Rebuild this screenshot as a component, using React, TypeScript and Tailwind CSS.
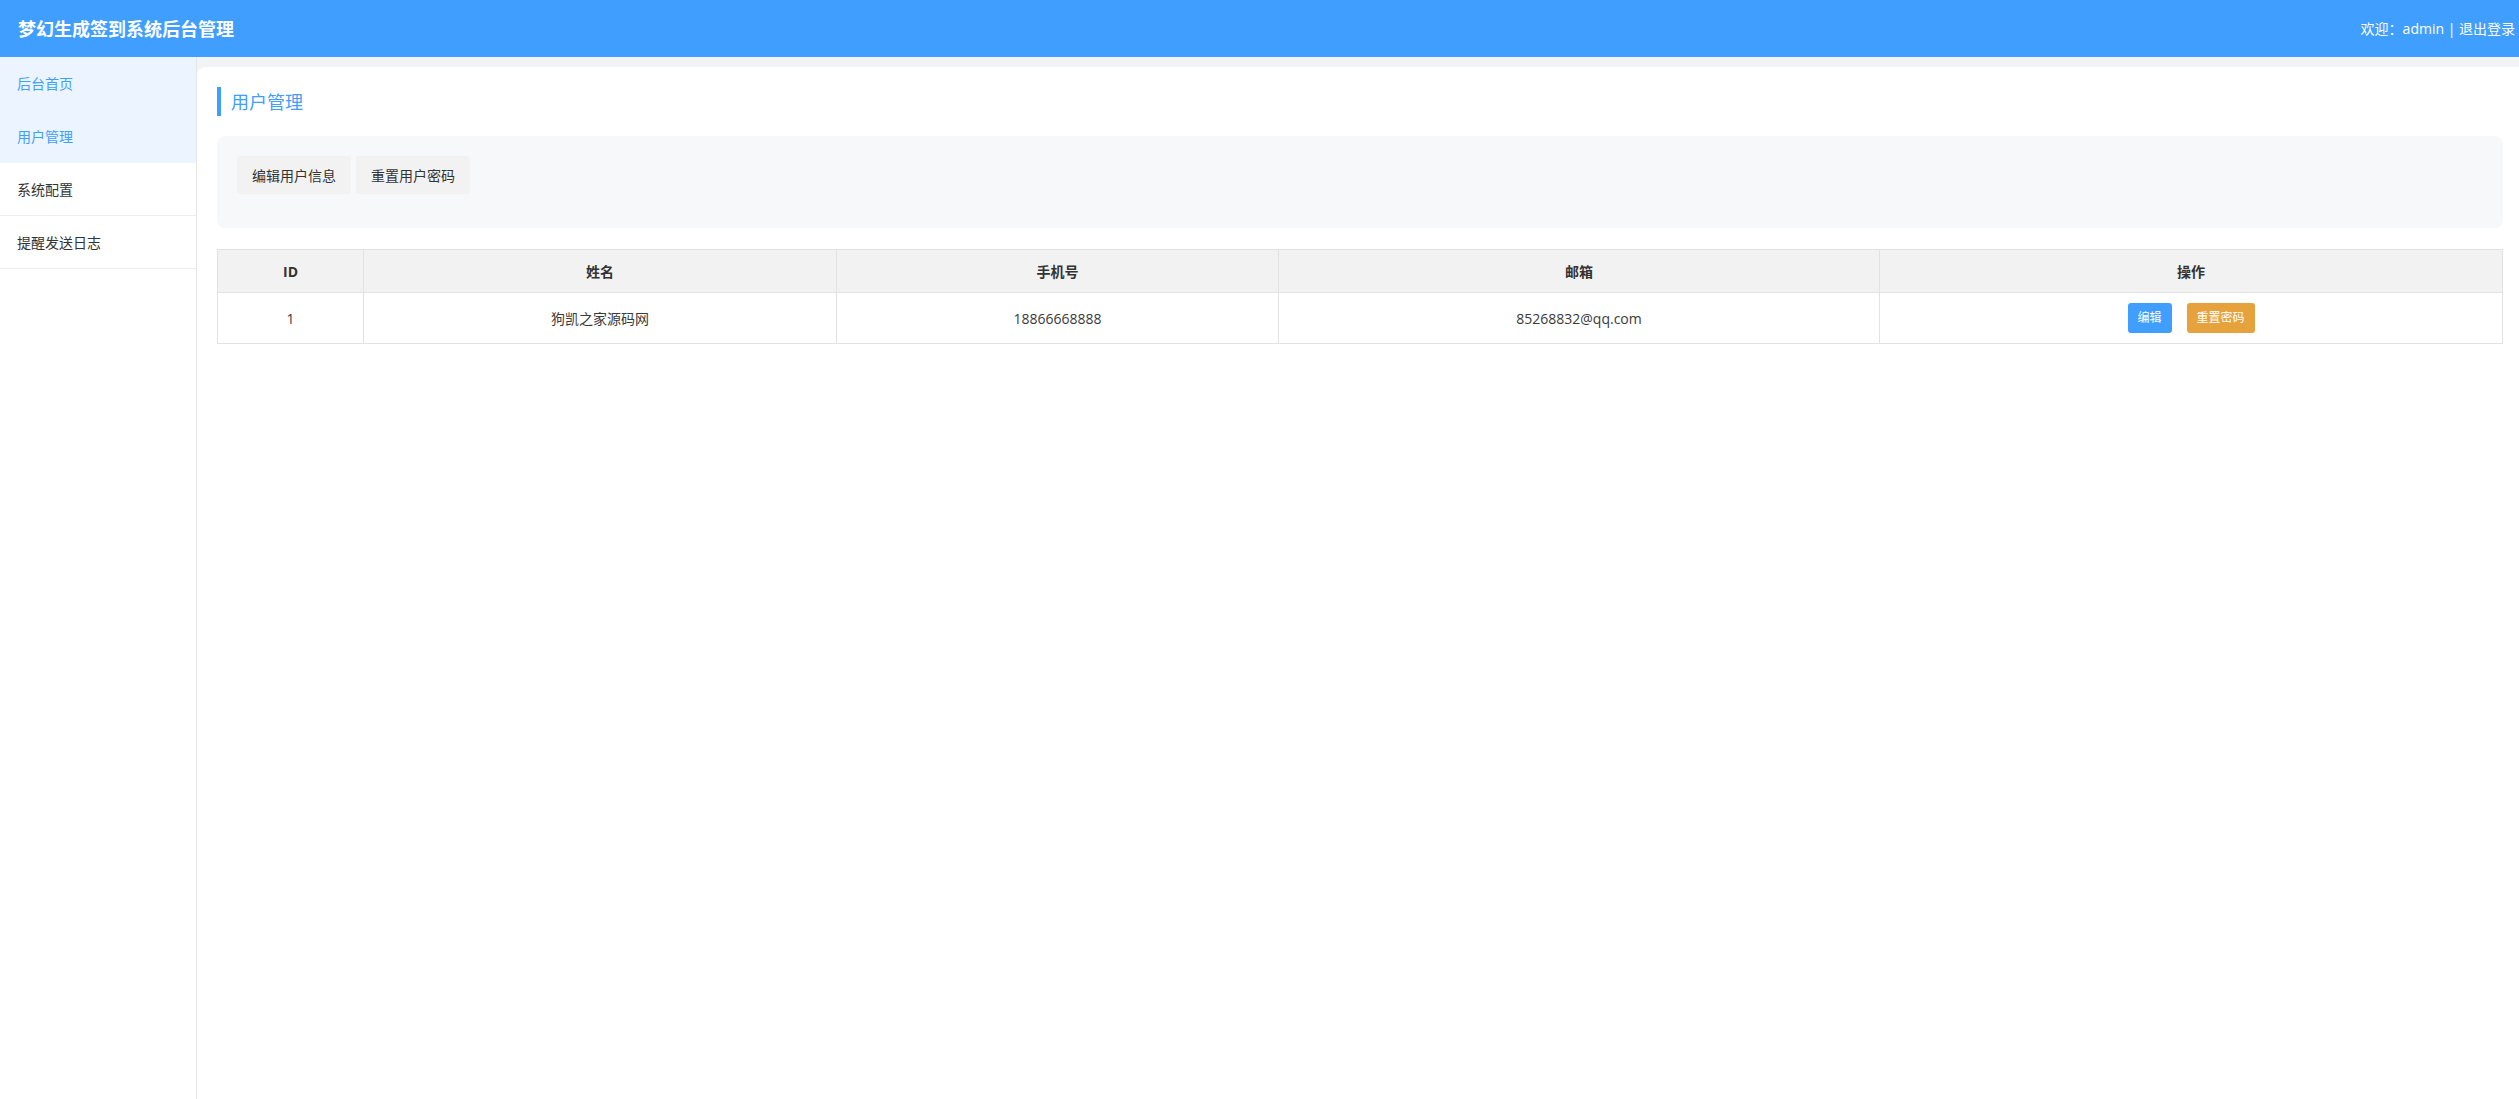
const menu = [
  { name: "后台首页", active: true },
  { name: "用户管理", active: true },
  { name: "系统配置", active: false },
  { name: "提醒发送日志", active: false },
];

const users = [
  { id: 1, name: "狗凯之家源码网", phone: "18866668888", email: "85268832@qq.com" },
];

const font = "font-['Open_Sans','Noto_Sans_CJK_SC',sans-serif]";

export default function App() {
  return (
    <div className={`flex h-screen flex-col bg-white text-[#333] ${font}`}>
      <header className="flex h-[57px] shrink-0 items-center justify-between bg-[#409eff] pl-[18px] pr-[4px] text-white">
        <h1 className="text-[18px] font-bold leading-none">梦幻生成签到系统后台管理</h1>
        <div className="text-[14px] leading-none">
          欢迎：admin | <span className="cursor-pointer">退出登录</span>
        </div>
      </header>

      <div className="flex min-h-0 flex-1">
        <aside className="w-[197px] shrink-0 border-r border-[#e6e6e6] bg-white">
          {menu.map((m) => (
            <div
              key={m.name}
              className={
                m.active
                  ? "flex h-[53px] items-center bg-[#ecf5ff] pl-[17px] text-[14px] text-[#409eff]"
                  : "flex h-[53px] items-center border-b border-[#eeeeee] pl-[17px] text-[14px] text-[#333]"
              }
            >
              {m.name}
            </div>
          ))}
        </aside>

        <main className="min-w-0 flex-1 bg-[#f2f3f5] pt-[10px]">
          <div className="h-full rounded-tl-[8px] bg-white pl-[20px] pr-[16px] pt-[20px]">
            <div className="flex h-[29px] items-center border-l-4 border-[#409eff] pl-[10px] text-[18px] leading-none text-[#409eff]">
              用户管理
            </div>

            <div className="mt-[20px] h-[92px] rounded-[8px] bg-[#f7f8fa] px-[20px] pt-[20px]">
              <div className="flex gap-[5px]">
                <button className="h-[38px] w-[114px] rounded-[3px] bg-[#f2f2f2] text-[14px] text-[#333]">
                  编辑用户信息
                </button>
                <button className="h-[38px] w-[114px] rounded-[3px] bg-[#f2f2f2] text-[14px] text-[#333]">
                  重置用户密码
                </button>
              </div>
            </div>

            <table className="mt-[21px] w-full table-fixed border-collapse text-[14px]">
              <colgroup>
                <col className="w-[146px]" />
                <col className="w-[473px]" />
                <col className="w-[442px]" />
                <col className="w-[601px]" />
                <col />
              </colgroup>
              <thead>
                <tr className="h-[43px] bg-[#f2f2f2]">
                  {["ID", "姓名", "手机号", "邮箱", "操作"].map((h) => (
                    <th key={h} className="border border-[#e2e2e2] text-center text-[14px] font-bold text-[#333]">
                      {h}
                    </th>
                  ))}
                </tr>
              </thead>
              <tbody>
                {users.map((u) => (
                  <tr key={u.id} className="h-[51px]">
                    <td className="border border-[#e2e2e2] text-center text-[#3a3a3a]">{u.id}</td>
                    <td className="border border-[#e2e2e2] text-center text-[#3a3a3a]">{u.name}</td>
                    <td className="border border-[#e2e2e2] text-center text-[#3a3a3a]">{u.phone}</td>
                    <td className="border border-[#e2e2e2] text-center text-[#3a3a3a]">{u.email}</td>
                    <td className="border border-[#e2e2e2] text-center">
                      <div className="flex items-center justify-center gap-[15px]">
                        <button className="h-[30px] w-[44px] rounded-[3px] bg-[#409eff] text-[12px] text-white">
                          编辑
                        </button>
                        <button className="h-[30px] w-[68px] rounded-[3px] bg-[#e6a23c] text-[12px] text-white">
                          重置密码
                        </button>
                      </div>
                    </td>
                  </tr>
                ))}
              </tbody>
            </table>
          </div>
        </main>
      </div>
    </div>
  );
}
